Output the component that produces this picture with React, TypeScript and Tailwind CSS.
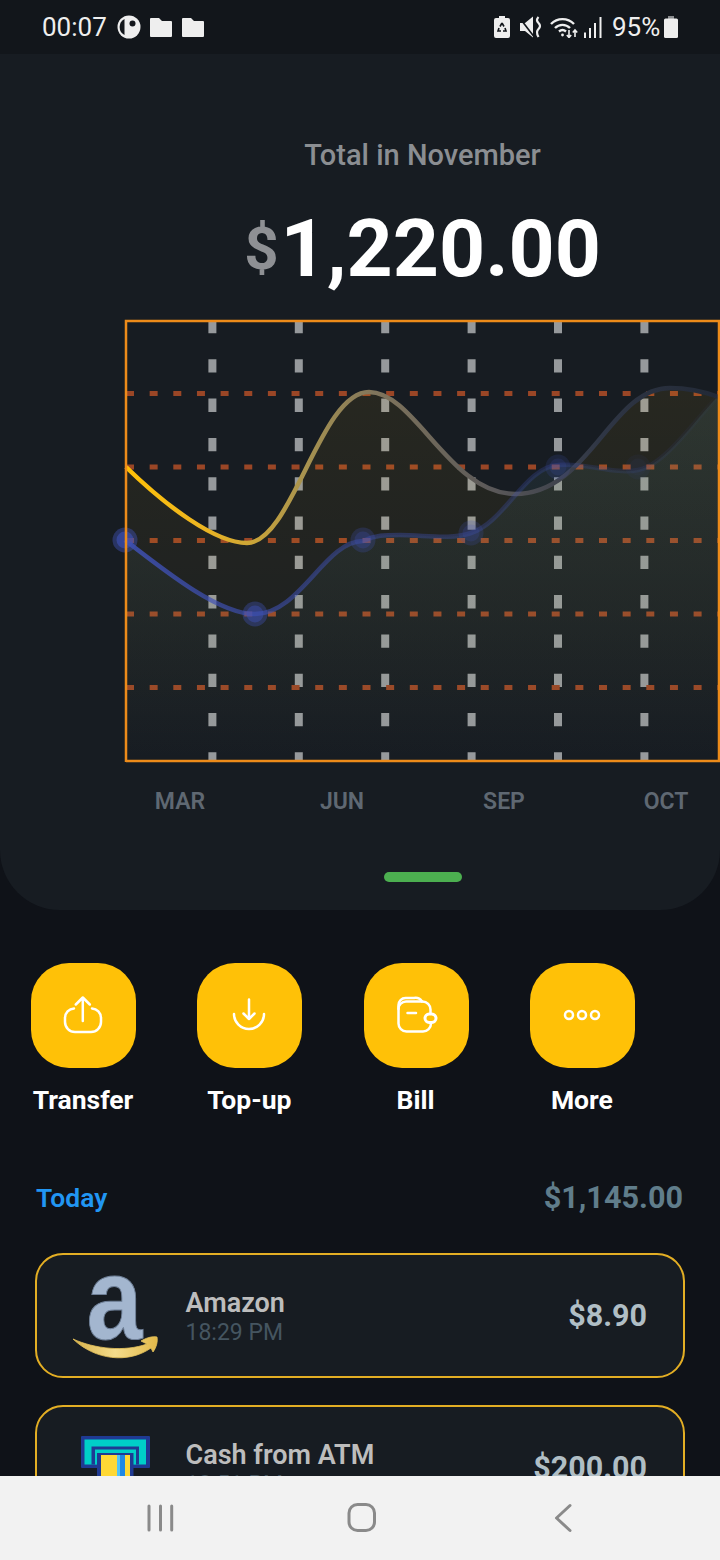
import React from "react";

const F = { fontFamily: "Roboto, sans-serif" };

function Chart() {
  const yellow =
    "M126 467 C165 505 215 543 247 543 C292 543 320 392 369 392 C415 392 450 494 515 494 C590 494 610 388 670 388 C690 388 705 392 719 397";
  const blue =
    "M125 540 C170 575 220 614 255 614 C300 614 325 541 363 541 C375 535 385 535 400 535 C425 535 450 540 471 533 C505 522 525 467 558 465 C585 462 615 475 638 470 C665 465 695 420 719 395";
  const vx = [212.4, 298.8, 385.2, 471.6, 558, 644.4];
  const hy = [393.6, 467, 540.6, 614, 687.6];
  const dots: [number, number, number][] = [
    [125, 540, 0.9],
    [255, 614, 0.75],
    [363, 540, 0.5],
    [471, 533, 0.4],
    [558, 467, 0.34],
    [638, 467, 0.13],
  ];
  return (
    <svg viewBox="113 319 607 443" className="block w-[607px] h-[443px] ml-[-13px] overflow-visible shrink-0">
      <defs>
        <linearGradient id="ys" gradientUnits="userSpaceOnUse" x1="126" y1="0" x2="719" y2="0">
          <stop offset="0" stopColor="#ffc107" />
          <stop offset="0.13" stopColor="#ecb522" />
          <stop offset="0.3" stopColor="#a8934f" />
          <stop offset="0.42" stopColor="#80755c" />
          <stop offset="0.62" stopColor="#5a5859" />
          <stop offset="0.8" stopColor="#2f3645" />
          <stop offset="1" stopColor="#222936" />
        </linearGradient>
        <linearGradient id="bs" gradientUnits="userSpaceOnUse" x1="126" y1="0" x2="719" y2="0">
          <stop offset="0" stopColor="#3f51b5" stopOpacity="0.85" />
          <stop offset="0.4" stopColor="#3f51b5" stopOpacity="0.42" />
          <stop offset="0.75" stopColor="#3f51b5" stopOpacity="0.22" />
          <stop offset="1" stopColor="#3f51b5" stopOpacity="0.03" />
        </linearGradient>
        <linearGradient id="yf" x1="0" y1="0" x2="0" y2="1">
          <stop offset="0" stopColor="#ffc107" stopOpacity="0.07" />
          <stop offset="0.6" stopColor="#ffc107" stopOpacity="0.035" />
          <stop offset="1" stopColor="#ffc107" stopOpacity="0" />
        </linearGradient>
        <linearGradient id="bf" gradientUnits="userSpaceOnUse" x1="0" y1="400" x2="0" y2="761">
          <stop offset="0" stopColor="#5f9aa0" stopOpacity="0.13" />
          <stop offset="0.6" stopColor="#5f9aa0" stopOpacity="0.05" />
          <stop offset="1" stopColor="#5f9aa0" stopOpacity="0" />
        </linearGradient>
      </defs>
      {vx.map((x) => (
        <line key={x} x1={x} x2={x} y1="320" y2="761" stroke="#96999c" strokeWidth="8" strokeDasharray="13.3 26" />
      ))}
      {hy.map((y) => (
        <line key={y} x1="126" x2="720" y1={y} y2={y} stroke="#9a4626" strokeWidth="5" strokeDasharray="8 15.65" />
      ))}
      <path d={`${yellow} V761 H126 Z`} fill="url(#yf)" />
      <path d={`${blue} V761 H126 Z`} fill="url(#bf)" />
      <path d={yellow} fill="none" stroke="url(#ys)" strokeWidth="4.5" />
      <path d={blue} fill="none" stroke="url(#bs)" strokeWidth="4.5" />
      {dots.map(([x, y, o]) => (
        <g key={x} opacity={o}>
          <circle cx={x} cy={y} r="12.5" fill="#3f51b5" opacity="0.5" />
          <circle cx={x} cy={y} r="8.5" fill="#3f51b5" opacity="0.75" />
        </g>
      ))}
      <path d="M126 762 V321 H720 M126 761 H720 M719 320 V762" fill="none" stroke="#ed8b1a" strokeWidth="2.5" />
    </svg>
  );
}

function ActionIcon({ kind }: { kind: string }) {
  return (
    <svg viewBox="0 0 105 105" className="block w-[105px] h-[105px]" fill="none" stroke="#fff" strokeWidth="2.5" strokeLinecap="round" strokeLinejoin="round">
      {kind === "up" && (
        <>
          <path d="M43 45.5 A9.5 9.5 0 0 0 34 55 V59 A10 10 0 0 0 44 69 H60 A10 10 0 0 0 70 59 V55 A9.5 9.5 0 0 0 61 45.5" />
          <path d="M51.8 58 V34.5 M44.8 41.5 L51.8 34.5 L58.8 41.5" />
        </>
      )}
      {kind === "down" && (
        <>
          <path d="M37 51 A15 15 0 0 0 67 51" />
          <path d="M52 36.5 V56 M46.5 50.5 L52 56 L57.5 50.5" />
        </>
      )}
      {kind === "bill" && (
        <>
          <path d="M66.5 49.5 V46.5 A8 8 0 0 0 58.5 38.5 H42 A7.5 7.5 0 0 0 34.5 46 V60.5 A8 8 0 0 0 42.5 68.5 H59 A8 8 0 0 0 67 60.5 V60" />
          <path d="M34.5 46 V42 A7 7 0 0 1 41.5 35 H50 A8 8 0 0 1 58 38.5" />
          <path d="M43.5 50 H52" />
          <rect x="61" y="51" width="11" height="8.5" rx="4.2" strokeWidth="3" />
        </>
      )}
      {kind === "more" && (
        <>
          <circle cx="39" cy="52" r="4" />
          <circle cx="52" cy="52" r="4" />
          <circle cx="65" cy="52" r="4" />
        </>
      )}
    </svg>
  );
}

function Action({ kind, label }: { kind: string; label: string }) {
  return (
    <div className="flex flex-col items-center w-[105px] shrink-0">
      <div className="w-[105px] h-[105px] rounded-[38px] bg-[#ffc107]">
        <ActionIcon kind={kind} />
      </div>
      <div className="mt-[15px] pr-[1px] text-[26.5px] leading-[34px] font-bold text-white whitespace-nowrap">{label}</div>
    </div>
  );
}

function AmazonLogo() {
  return (
    <svg viewBox="70 1255 90 121" className="block w-[90px] h-[121px] shrink-0 overflow-visible">
      <defs>
        <linearGradient id="sm" x1="0" y1="0" x2="1" y2="0">
          <stop offset="0" stopColor="#d9b24a" />
          <stop offset="0.5" stopColor="#f4dc8c" />
          <stop offset="1" stopColor="#e2b94a" />
        </linearGradient>
      </defs>
      <text
        x="0"
        y="0"
        textAnchor="middle"
        fontSize="117"
        fontWeight="700"
        fill="#a3b6cf"
        stroke="#6f8098"
        strokeWidth="1"
        transform="translate(114.5 1339) scale(0.86 1)"
        style={{ fontFamily: '"Liberation Sans", sans-serif' }}
      >
        a
      </text>
      <path
        d="M73 1339 C95 1349 125 1352 147 1344 L141 1341 C146 1338 152 1336 157 1337 C158 1342 156 1348 153 1352 L151 1348 C128 1364 95 1360 73 1339 Z"
        fill="url(#sm)"
        stroke="#e5c15a"
        strokeWidth="0.8"
        strokeLinejoin="round"
      />
    </svg>
  );
}

function AtmLogo() {
  return (
    <svg viewBox="70 1407 90 121" className="block w-[90px] h-[121px] shrink-0">
      <rect x="81" y="1436" width="69" height="32" rx="1" fill="#1f3a93" />
      <rect x="84.5" y="1439.5" width="61.5" height="25" fill="#00cfc8" />
      <rect x="91.5" y="1446.5" width="47.5" height="18" fill="#1f3a93" />
      <rect x="95" y="1449.5" width="41" height="15" fill="#00cfc8" />
      <rect x="97" y="1453" width="36.5" height="70" fill="#1f3a93" />
      <rect x="101" y="1455" width="16" height="70" fill="#ffd835" />
      <rect x="117" y="1455" width="3" height="70" fill="#4fc3f7" />
      <rect x="120" y="1455" width="5" height="70" fill="#1e88e5" />
      <rect x="125" y="1455" width="5" height="70" fill="#ffd835" />
    </svg>
  );
}

function Card({ logo, name, time, price }: { logo: React.ReactNode; name: string; time: string; price: string }) {
  return (
    <div className="h-[125px] w-[650px] shrink-0 rounded-[28px] border-2 border-[#e3ae24] bg-[#171c22] flex items-center pl-[33px] pr-[36px]">
      {logo}
      <div className="ml-[25.5px] pt-[4px] flex-1 flex flex-col">
        <div className="text-[27px] leading-[30px] font-semibold text-[#bdbdbd]">{name}</div>
        <div className="text-[23px] leading-[30px] text-[#455560]">{time}</div>
      </div>
      <div className="text-[30.5px] font-bold text-[#b0bec5]">{price}</div>
    </div>
  );
}

function StatusBar() {
  const folder = (
    <svg viewBox="0 0 22 19" className="block w-[22px] h-[19px]">
      <path d="M1 0 H9 L12 3 H21 A1 1 0 0 1 22 4 V18 A1 1 0 0 1 21 19 H1 A1 1 0 0 1 0 18 V1 A1 1 0 0 1 1 0Z" fill="#eeeeee" />
    </svg>
  );
  return (
    <div className="h-[54px] shrink-0 bg-[#12161b] flex items-center justify-between pl-[42px] pr-[42px] text-[#eeeeee]">
      <div className="flex items-center">
        <span className="text-[26px] leading-[54px] w-[65px]">00:07</span>
        <svg viewBox="0 0 24 24" className="block w-[24px] h-[24px] ml-[10px]">
          <circle cx="12" cy="12" r="11.5" fill="#eeeeee" />
          <path d="M7.5 4 V20 A9 9 0 0 1 7.5 4Z" fill="#12161b" />
          <circle cx="15.5" cy="8.5" r="3" fill="#12161b" />
        </svg>
        <div className="ml-[9px]">{folder}</div>
        <div className="ml-[10px]">{folder}</div>
      </div>
      <div className="flex items-center">
        <svg viewBox="0 0 16 22" className="block w-[16px] h-[22px]">
          <path d="M5 0 H11 V2 H14 A2 2 0 0 1 16 4 V20 A2 2 0 0 1 14 22 H2 A2 2 0 0 1 0 20 V4 A2 2 0 0 1 2 2 H5Z" fill="#eeeeee" />
          <path d="M8 7 L10 10.5 M8 7 L6 10.5 M5 12 L4 15 H7 M11 12 L12 15 H9" stroke="#12161b" strokeWidth="1.6" fill="none" />
        </svg>
        <svg viewBox="0 0 22 22" className="block w-[22px] h-[22px] ml-[10px]" fill="none">
          <path d="M0 7 H5 L13 0.5 V21.5 L5 15 H0Z" fill="#eeeeee" />
          <path d="M0.5 3 L13.5 20" stroke="#12161b" strokeWidth="1.6" />
          <path d="M18.5 1 Q15.5 4 18.5 7 Q21.5 10 18.5 13 Q15.5 16 18.5 21" stroke="#eeeeee" strokeWidth="2.2" />
        </svg>
        <svg viewBox="0 0 28 22" className="block w-[28px] h-[22px] ml-[8px]" fill="none" stroke="#eeeeee" strokeWidth="2.4">
          <path d="M1 8 A16 16 0 0 1 24 8" />
          <path d="M5 12 A10.5 10.5 0 0 1 20 12" />
          <path d="M9 15.5 A5.5 5.5 0 0 1 16 15.5" />
          <circle cx="12.5" cy="19" r="1.4" fill="#eeeeee" stroke="none" />
          <path d="M19 14 V21.5 M16.8 19 L19 21.5 L21.2 19" strokeWidth="1.6" />
          <path d="M25 21 V14 M22.8 16.5 L25 14 L27.2 16.5" strokeWidth="1.6" />
        </svg>
        <svg viewBox="0 0 18 21" className="block w-[18px] h-[21px] ml-[6px]">
          <rect x="0" y="15.5" width="2" height="5.5" fill="#eeeeee" />
          <rect x="5" y="11" width="2" height="10" fill="#eeeeee" />
          <rect x="10" y="6" width="2" height="15" fill="#eeeeee" />
          <rect x="15.5" y="0" width="2" height="21" fill="#eeeeee" />
        </svg>
        <span className="text-[26px] leading-[54px] ml-[10px] w-[48px] whitespace-nowrap">95%</span>
        <svg viewBox="0 0 14 22" className="block w-[14px] h-[22px] ml-[4px]">
          <rect x="4" y="0" width="6" height="3" fill="#8a8c8f" />
          <rect x="0" y="2.5" width="14" height="19.5" rx="1.5" fill="#eeeeee" />
        </svg>
      </div>
    </div>
  );
}

export default function App() {
  return (
    <div style={F} className="w-[720px] h-[1560px] overflow-hidden flex flex-col bg-[#0f1218]">
      <StatusBar />
      <div className="flex-1 min-h-0 overflow-hidden">
        <div className="h-[856px] rounded-b-[60px] bg-[#171c22] pl-[125px] flex flex-col items-center overflow-hidden">
          <div className="pt-[84px] text-[29px] leading-[34px] font-medium text-[#8b8e92] whitespace-nowrap">Total in November</div>
          <div className="mt-[32px] h-[90px] flex items-center whitespace-nowrap">
            <span className="text-[60px] font-bold text-[#8e9094] mr-[2px]">$</span>
            <span className="text-[80.5px] leading-[90px] font-bold text-white">1,220.00</span>
          </div>
          <div className="mt-[25px] self-start ml-[1px]">
            <Chart />
          </div>
          <div className="mt-[26px] self-start ml-[-26px] grid grid-cols-[repeat(4,162px)] text-center text-[23px] leading-[28px] font-semibold text-[#5f6872]">
            <div>MAR</div>
            <div>JUN</div>
            <div>SEP</div>
            <div>OCT</div>
          </div>
          <div className="mt-[56px] ml-[1px] w-[78px] h-[10px] rounded-full bg-[#4caf50]" />
        </div>
        <div className="pt-[53px] pl-[31px] flex gap-[61.3px]">
          <Action kind="up" label="Transfer" />
          <Action kind="down" label="Top-up" />
          <Action kind="bill" label="Bill" />
          <Action kind="more" label="More" />
        </div>
        <div className="mt-[64px] pl-[36px] pr-[37px] flex items-center justify-between h-[34px]">
          <span className="text-[26.5px] font-semibold text-[#2196f3]">Today</span>
          <span className="text-[30.6px] font-bold text-[#607d8b]">$1,145.00</span>
        </div>
        <div className="mt-[38px] ml-[35px] flex flex-col gap-[27px]">
          <Card logo={<AmazonLogo />} name="Amazon" time="18:29 PM" price="$8.90" />
          <Card logo={<AtmLogo />} name="Cash from ATM" time="18:51 PM" price="$200.00" />
        </div>
      </div>
      <div className="h-[84px] shrink-0 bg-[#f2f2f2] flex items-center justify-center">
        <svg viewBox="0 1476 720 84" className="block w-[720px] h-[84px]" fill="none" stroke="#8a8a8a" strokeLinecap="round" strokeLinejoin="round">
          <path d="M149 1506 V1530 M160.5 1506 V1530 M171.7 1506 V1530" strokeWidth="3" />
          <rect x="349" y="1504.5" width="25.5" height="26" rx="8.5" strokeWidth="3" />
          <path d="M570 1505.5 L556.5 1518 L570 1530.5" strokeWidth="3" />
        </svg>
      </div>
    </div>
  );
}
